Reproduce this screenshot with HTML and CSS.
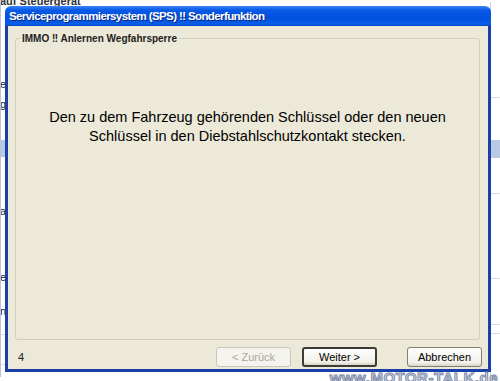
FILE: index.html
```html
<!DOCTYPE html>
<html lang="de">
<head>
    <meta charset="UTF-8">
    <title>Serviceprogrammiersystem (SPS) ‼ Sonderfunktion</title>
    <link rel="stylesheet" href="styles.css">
</head>
<body>
<div class="desktop">
    <div class="bgwin">
        <div class="bg-caption">auf Steuergerät</div>
        <div class="bg-cols">
            <div class="bg-list left">
                <div class="row" style="height:70px"></div>
                <div class="row txt" style="height:18px">e</div>
                <div class="row txt" style="height:20px">g</div>
                <div class="row" style="height:30px"></div>
                <div class="row sel" style="height:17px"></div>
                <div class="row" style="height:40px"></div>
                <div class="row txt" style="height:20px">a</div>
                <div class="row" style="height:50px"></div>
                <div class="row txt" style="height:16px">e</div>
                <div class="row txt" style="height:34px">n</div>
                <div class="row line" style="height:18px"></div>
                <div class="row line" style="height:30px"></div>
            </div>
            <div class="bg-gap"></div>
            <div class="bg-list right">
                <div class="row line" style="height:96px"></div>
                <div class="row" style="height:42px"></div>
                <div class="row sel" style="height:18px"></div>
                <div class="row line" style="height:36px"></div>
                <div class="row line" style="height:85px"></div>
                <div class="row line" style="height:46px"></div>
                <div class="row line" style="height:9px"></div>
                <div class="row" style="height:40px"></div>
            </div>
        </div>
    </div>

    <div class="dialog">
        <div class="titlebar">Serviceprogrammiersystem (SPS) ‼ Sonderfunktion</div>
        <div class="dlg-body">
            <fieldset class="group">
                <legend>IMMO ‼ Anlernen Wegfahrsperre</legend>
                <p class="prompt">Den zu dem Fahrzeug gehörenden Schlüssel oder den neuen<br>Schlüssel in den Diebstahlschutzkontakt stecken.</p>
            </fieldset>
            <div class="footer">
                <span class="step">4</span>
                <div class="buttons">
                    <button class="btn" disabled>&lt; Zurück</button>
                    <button class="btn default">Weiter &gt;</button>
                    <button class="btn cancel">Abbrechen</button>
                </div>
            </div>
        </div>
    </div>

    <div class="watermark">www.MOTOR-TALK.de</div>
</div>
</body>
</html>
```

FILE: styles.css
```css
body {
    margin: 0;
    font-family: 'Liberation Sans', Arial, sans-serif;
    background: #ffffff;
    overflow: hidden;
}

.desktop {
    position: relative;
    width: 500px;
    height: 381px;
    overflow: hidden;
    background: #ffffff;
}

/* window behind the dialog */
.bgwin {
    height: 100%;
}

.bg-caption {
    font-size: 11px;
    font-weight: bold;
    color: #333;
    line-height: 11px;
    margin-top: -4px;
    height: 6px;
}

.bg-cols {
    display: flex;
    height: 375px;
}

.bg-list {
    display: flex;
    flex-direction: column;
    font-size: 11px;
    color: #222;
}

.bg-list.left {
    width: 5px;
    border-left: 1px solid #b8c4d8;
    overflow: hidden;
}

.bg-list.right {
    width: 9px;
    border-left: 1px solid #c8d0dc;
}

.bg-gap {
    flex: 1;
}

.row {
    flex: none;
    box-sizing: border-box;
}

.row.txt {
    line-height: 12px;
    display: flex;
    align-items: flex-end;
    justify-content: flex-end;
}

.row.line {
    border-bottom: 1px solid #d6dbe4;
}

.row.sel {
    background: #b9c9e4;
}

/* dialog window */
.dialog {
    position: absolute;
    left: 5px;
    top: 6px;
    width: 486px;
    height: 366px;
    display: flex;
    flex-direction: column;
}

.titlebar {
    height: 20px;
    line-height: 20px;
    padding-left: 4px;
    color: #ffffff;
    font-size: 11.5px;
    font-weight: bold;
    letter-spacing: -0.6px;
    border-radius: 6px 6px 0 0;
    background: linear-gradient(#3a86f4, #0a5ae6 20%, #0050e0 60%, #0a5ee8 90%, #0544c4);
    text-shadow: 1px 1px 0 #0a2a80;
    white-space: nowrap;
}

.dlg-body {
    flex: 1;
    background: #ece9d8;
    border: 3px solid #1a3eaa;
    border-top: none;
    display: flex;
    flex-direction: column;
}

.group {
    margin: 7px 8px 0 7px;
    padding: 0;
    height: 307px;
    box-sizing: border-box;
    border: 1px solid #d0cfbf;
    border-radius: 3px;
}

.group legend {
    font-size: 10px;
    font-weight: bold;
    color: #222;
    padding: 0 2px;
    margin-left: 4px;
}

.prompt {
    margin: 64px 0 0 0;
    text-align: center;
    font-size: 14.5px;
    line-height: 19px;
    color: #000;
}

.footer {
    display: flex;
    align-items: center;
    padding: 7px 6px 0 10px;
}

.step {
    font-size: 11px;
    color: #222;
}

.buttons {
    margin-left: auto;
    display: flex;
}

.btn {
    width: 75px;
    height: 20px;
    padding: 0;
    font-family: 'Liberation Sans', Arial, sans-serif;
    font-size: 11px;
    color: #000;
    background: linear-gradient(#fefefd, #f2f1ea 80%, #d8d4c6);
    border: 1px solid #7f7f74;
    border-radius: 3px;
}

.btn[disabled] {
    color: #aca899;
    border-color: #c9c7ba;
    background: #f4f3ee;
    margin-right: 11px;
}

.btn.default {
    border: 2px solid #3c3c36;
    margin-right: 30px;
}

.watermark {
    position: absolute;
    right: 2px;
    bottom: -5px;
    font-size: 15px;
    font-weight: bold;
    letter-spacing: 0.5px;
    color: #d8dce8;
    -webkit-text-stroke: 1px #7d8aa8;
    white-space: nowrap;
}
```
